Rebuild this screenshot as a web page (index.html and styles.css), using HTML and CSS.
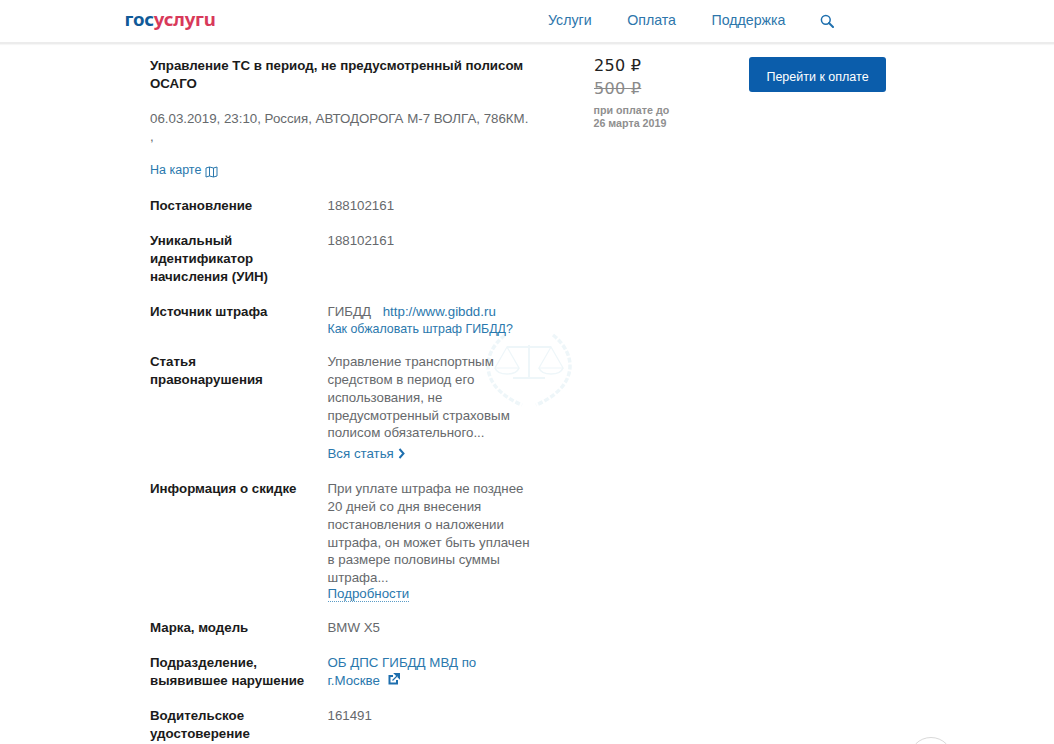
FILE: index.html
```html
<!DOCTYPE html>
<html lang="ru">
<head>
<meta charset="utf-8">
<title>Госуслуги</title>
<link rel="stylesheet" href="styles.css">
</head>
<body>
<header class="topbar">
  <a class="logo"><span class="logo-blue">гос</span><span class="logo-red">услугu</span></a>
  <nav class="nav">
    <a>Услуги</a>
    <a>Оплата</a>
    <a>Поддержка</a>
    <svg class="search" viewBox="0 0 14 14" width="14" height="14"><circle cx="5.8" cy="5.8" r="4.4" fill="none" stroke="#1e6fae" stroke-width="1.5"/><path d="M9 9l4 4" stroke="#1e6fae" stroke-width="2" stroke-linecap="round"/></svg>
  </nav>
</header>
<main class="page">
  <section class="details">
    <h1 class="title">Управление ТС в период, не предусмотренный полисом ОСАГО</h1>
    <p class="place">06.03.2019, 23:10, Россия, АВТОДОРОГА М-7 ВОЛГА, 786КМ.<br>,</p>
    <a class="map-link">На карте <svg class="map-icon" viewBox="0 0 13 12" width="13" height="12"><path d="M1 2l3.500-1 4 1 3.500-1v9l-3.500 1-4-1-3.500 1zM4.500 1v9M8.500 2v9" fill="none" stroke="#2a78ad" stroke-width="1"/></svg></a>
    <div class="row"><div class="label">Постановление</div><div class="value">188102161</div></div>
    <div class="row"><div class="label">Уникальный идентификатор начисления (УИН)</div><div class="value">188102161</div></div>
    <div class="row"><div class="label">Источник штрафа</div><div class="value">ГИБДД <a class="site">http://www.gibdd.ru</a><a class="appeal">Как обжаловать штраф ГИБДД?</a></div></div>
    <div class="row"><div class="label">Статья правонарушения</div><div class="value">Управление транспортным средством в период его использования, не предусмотренный страховым полисом обязательного...<a class="more">Вся статья <svg class="chev" viewBox="0 0 7 11" width="7" height="11"><path d="M1.500 1l4 4.500-4 4.500" fill="none" stroke="#1e6fae" stroke-width="2"/></svg></a></div></div>
    <div class="row"><div class="label">Информация о скидке</div><div class="value">При уплате штрафа не позднее 20 дней со дня внесения постановления о наложении штрафа, он может быть уплачен в размере половины суммы штрафа...<a class="dotted">Подробности</a></div></div>
    <div class="row"><div class="label">Марка, модель</div><div class="value">BMW X5</div></div>
    <div class="row"><div class="label">Подразделение, выявившее нарушение</div><div class="value"><a>ОБ ДПС ГИБДД МВД по<br>г.Москве <svg class="ext" viewBox="0 0 12 12" width="12" height="12"><path d="M9 7v3.500H1.500V3H5" fill="none" stroke="#1e6fae" stroke-width="2"/><path d="M4.500 7.500L10 2M6.500 0.500h5v5z" fill="#1e6fae" stroke="#1e6fae" stroke-width="1.200"/></svg></a></div></div>
    <div class="row"><div class="label">Водительское удостоверение</div><div class="value">161491</div></div>
  </section>
  <aside class="price">
    <div class="now">250 ₽</div>
    <div class="old">500 ₽</div>
    <div class="until">при оплате до<br>26 марта 2019</div>
  </aside>
  <div class="action"><a class="pay">Перейти к оплате</a></div>
  <svg class="emblem" viewBox="0 0 100 90" width="100" height="90" aria-hidden="true">
    <g fill="none" stroke="#eef6f9">
      <path d="M25 10C0 30 0 62 42 80M73 10c25 20 25 52-17 70" stroke-width="3.500" stroke-dasharray="5 2"/>
      <path d="M49 20v32M27 22h44M33 53h32" stroke-width="2"/>
      <path d="M27 22L15 43h24zM71 22L59 43h24z" stroke-width="1.200"/>
      <path d="M15 43c3 8 21 8 24 0M59 43c3 8 21 8 24 0" stroke-width="1.500"/>
    </g>
  </svg>
</main>
<div class="helper" aria-hidden="true"></div>
</body>
</html>
```
FILE: styles.css
```css
html {
  margin: 0;
  padding: 0;
  height: 744px;
  overflow: hidden;
  background: #fff;
}
body {
  margin: 0;
  padding: 0;
  height: 744px;
  overflow: hidden;
  position: relative;
  font-family: "Liberation Sans", Arial, sans-serif;
  font-size: 13.300px;
  line-height: 17.800px;
  color: #66696c;
}
a { color: #2a78ad; }

.topbar {
  height: 42px;
  border-bottom: 2px solid #ececec;
  display: flex;
  align-items: center;
  justify-content: space-between;
  padding-left: 124.500px;
  padding-right: 220px;
  box-shadow: 0 1px 1px #f6f6f6;
}
.logo {
  font-family: "Noto Sans", sans-serif;
  font-weight: 700;
  font-size: 18.600px;
  line-height: 24px;
  letter-spacing: -0.200px;
  margin-top: -4px;
}
.logo-blue { color: #0f5a98; }
.logo-red { color: #d8395a; }
.nav {
  display: flex;
  align-items: center;
  gap: 35.500px;
  font-size: 14.200px;
}
.nav a { color: #2d76ab; }
.search { margin-left: -1px; }

.page {
  position: relative;
  display: flex;
  padding-left: 150px;
  padding-top: 13px;
}
.details { width: 384px; flex: none; }
.title {
  margin: 0;
  font-size: 13.300px;
  font-weight: 700;
  line-height: 18px;
  color: #1b1b1b;
}
.place {
  margin: 17px 0 0;
  line-height: 18px;
  white-space: nowrap;
}
.map-link {
  display: flex;
  align-items: center;
  gap: 4px;
  margin-top: 16px;
  font-size: 12.500px;
  height: 18px;
}
.map-icon { flex: none; margin-top: 2px; }
.row {
  display: flex;
  margin-top: 17.300px;
}
.label {
  width: 177.500px;
  flex: none;
  box-sizing: border-box;
  padding-right: 20px;
  font-weight: 700;
  color: #1b1b1b;
}
.value { width: 203px; flex: none; }
.site { margin-left: 8px; }
.appeal {
  display: block;
  font-size: 12.400px;
  line-height: 15px;
  margin-top: 1px;
  margin-bottom: -1px;
}
.more { display: block; margin-top: 3px; }
.chev { vertical-align: -1px; }
.dotted {
  display: block;
  width: fit-content;
  border-bottom: 1.500px dotted #5b9cc6;
  line-height: 14px;
}
.ext { margin-left: 4px; vertical-align: 0; }

.price { margin-left: 60px; width: 155px; flex: none; margin-top: -2px; }
.now, .old {
  font-family: "DejaVu Sans", sans-serif;
  font-size: 16px;
  line-height: 22px;
  color: #222;
  letter-spacing: 0.300px;
}
.old { color: #8a8a8a; text-decoration: line-through; margin-top: 1px; }
.until {
  margin-top: 4px;
  margin-left: -0.500px;
  font-size: 10.700px;
  line-height: 13px;
  font-weight: 700;
  color: #8f8f8f;
}
.action { flex: none; }
.pay {
  display: block;
  width: 137px;
  height: 35px;
  line-height: 40px;
  border-radius: 3px;
  background: #0b5dab;
  color: #fff;
  font-size: 12.500px;
  text-align: center;
}
.emblem { position: absolute; left: 480px; top: 281px; z-index: -1; }
.helper {
  position: absolute;
  left: 909px;
  top: 737px;
  width: 42px;
  height: 42px;
  border: 1px solid #d9d9d9;
  border-radius: 50%;
}
```
